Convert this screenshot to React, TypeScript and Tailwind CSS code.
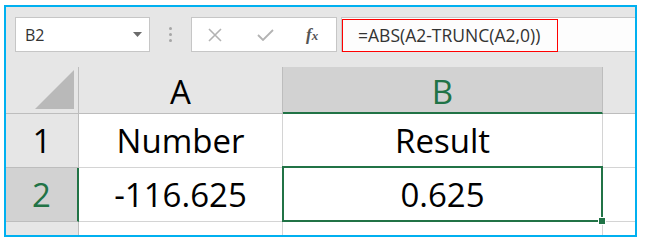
import React from "react";

const cellFont = { fontFamily: '"Open Sans", "Liberation Sans", sans-serif' };

export default function App() {
  return (
    <div className="w-[645px] h-[244px] bg-white overflow-hidden" style={cellFont}>
      <div className="ml-[4px] mt-[5px] w-[633px] h-[232px] border-2 border-[#00b0f0] bg-[#e6e6e6] overflow-hidden flex flex-col">
        {/* Toolbar */}
        <div className="flex items-stretch h-[35px] mt-[10px] shrink-0">
          <div className="ml-[9px] w-[135px] bg-white border border-[#c6c6c6] flex items-center justify-between pl-[9px] pr-[7px]">
            <span className="text-[16px] text-[#333] leading-none">B2</span>
            <svg width="9" height="5" viewBox="0 0 9 5">
              <polygon points="0,0 9,0 4.5,5" fill="#6b6b6b" />
            </svg>
          </div>
          <div className="w-[41px] flex flex-col items-center justify-center gap-[3px]">
            <span className="w-[3px] h-[3px] rounded-full bg-[#a6a6a6]" />
            <span className="w-[3px] h-[3px] rounded-full bg-[#a6a6a6]" />
            <span className="w-[3px] h-[3px] rounded-full bg-[#a6a6a6]" />
          </div>
          <div className="w-[146px] bg-white border border-[#c6c6c6] flex items-center">
            <svg className="ml-[15px]" width="16" height="14" viewBox="0 0 16 14">
              <path d="M2 1 L14 13 M14 1 L2 13" stroke="#b3b3b3" strokeWidth="1.6" fill="none" />
            </svg>
            <svg className="ml-[34px]" width="17" height="12" viewBox="0 0 17 12">
              <path d="M1 6 L6 11 L16 1" stroke="#b3b3b3" strokeWidth="1.8" fill="none" />
            </svg>
            <span
              className="ml-[32px] italic font-bold text-[#555] text-[17px] leading-none"
              style={{ fontFamily: '"Liberation Serif", serif' }}
            >
              f<span className="text-[13px]">x</span>
            </span>
          </div>
          <div className="ml-[4px] flex-1 bg-[#fdfdfd] border-y border-l border-[#c6c6c6] pt-[1px]">
            <div className="w-[216px] h-[33px] border-[1.5px] border-[#ff0000] flex items-center pl-[15px]">
              <span className="text-[17.5px] text-[#333] leading-none">=ABS(A2-TRUNC(A2,0))</span>
            </div>
          </div>
        </div>

        {/* Grid */}
        <div className="mt-[15px] flex flex-col">
          {/* Header row */}
          <div className="flex h-[47px] shrink-0">
            <div className="w-[73px] relative bg-[#e6e6e6] border-r border-b border-[#bdbdbd]">
              <svg className="absolute left-0 top-0" width="72" height="46" viewBox="0 0 72 46">
                <polygon points="29,42 68,42 68,3" fill="#b9b9b9" />
              </svg>
            </div>
            <div className="w-[204px] bg-[#e6e6e6] border-r border-b border-[#bdbdbd] flex items-center justify-center pt-[3px]">
              <span className="text-[33px] leading-none text-black">A</span>
            </div>
            <div className="w-[320px] bg-[#d2d2d2] border-r border-[#bdbdbd] border-b-2 border-b-[#217346] flex items-center justify-center pt-[3px]">
              <span className="text-[33px] leading-none text-[#217346]">B</span>
            </div>
            <div className="flex-1 bg-[#e6e6e6] border-b border-[#bdbdbd]" />
          </div>

          {/* Row 1 */}
          <div className="flex h-[54px] shrink-0">
            <div className="w-[73px] bg-[#e6e6e6] border-r border-b border-[#bdbdbd] flex items-center justify-center">
              <span className="text-[33px] leading-none text-black">1</span>
            </div>
            <div className="w-[204px] bg-white border-r border-b border-[#d4d4d4] flex items-center justify-center">
              <span className="text-[33px] leading-none text-black">Number</span>
            </div>
            <div className="w-[320px] bg-white border-r border-b border-[#d4d4d4] flex items-center justify-center">
              <span className="text-[33px] leading-none text-black">Result</span>
            </div>
            <div className="flex-1 bg-white border-b border-[#d4d4d4]" />
          </div>

          {/* Row 2 */}
          <div className="flex h-[54px] shrink-0">
            <div className="w-[73px] bg-[#d2d2d2] border-r-2 border-r-[#217346] border-b border-b-[#bdbdbd] flex items-center justify-center">
              <span className="text-[33px] leading-none text-[#217346]">2</span>
            </div>
            <div className="w-[204px] bg-white border-r border-b border-[#d4d4d4] flex items-center justify-center">
              <span className="text-[33px] leading-none text-black">-116.625</span>
            </div>
            <div className="w-[320px] relative bg-white border-r border-b border-[#d4d4d4] flex items-center justify-center">
              <span className="text-[33px] leading-none text-black">0.625</span>
              <div className="absolute left-[-1px] right-[-1px] top-[-2px] bottom-[-1px] border-2 border-[#217346] z-10">
                <div className="absolute right-[-5px] bottom-[-5px] w-[8px] h-[8px] bg-[#217346] border border-white" />
              </div>
            </div>
            <div className="flex-1 bg-white border-b border-[#d4d4d4]" />
          </div>

          {/* Row 3 (partial) */}
          <div className="flex h-[54px] shrink-0">
            <div className="w-[73px] bg-[#e6e6e6] border-r border-b border-[#bdbdbd]" />
            <div className="w-[204px] bg-white border-r border-b border-[#d4d4d4]" />
            <div className="w-[320px] bg-white border-r border-b border-[#d4d4d4]" />
            <div className="flex-1 bg-white border-b border-[#d4d4d4]" />
          </div>
        </div>
      </div>
    </div>
  );
}
